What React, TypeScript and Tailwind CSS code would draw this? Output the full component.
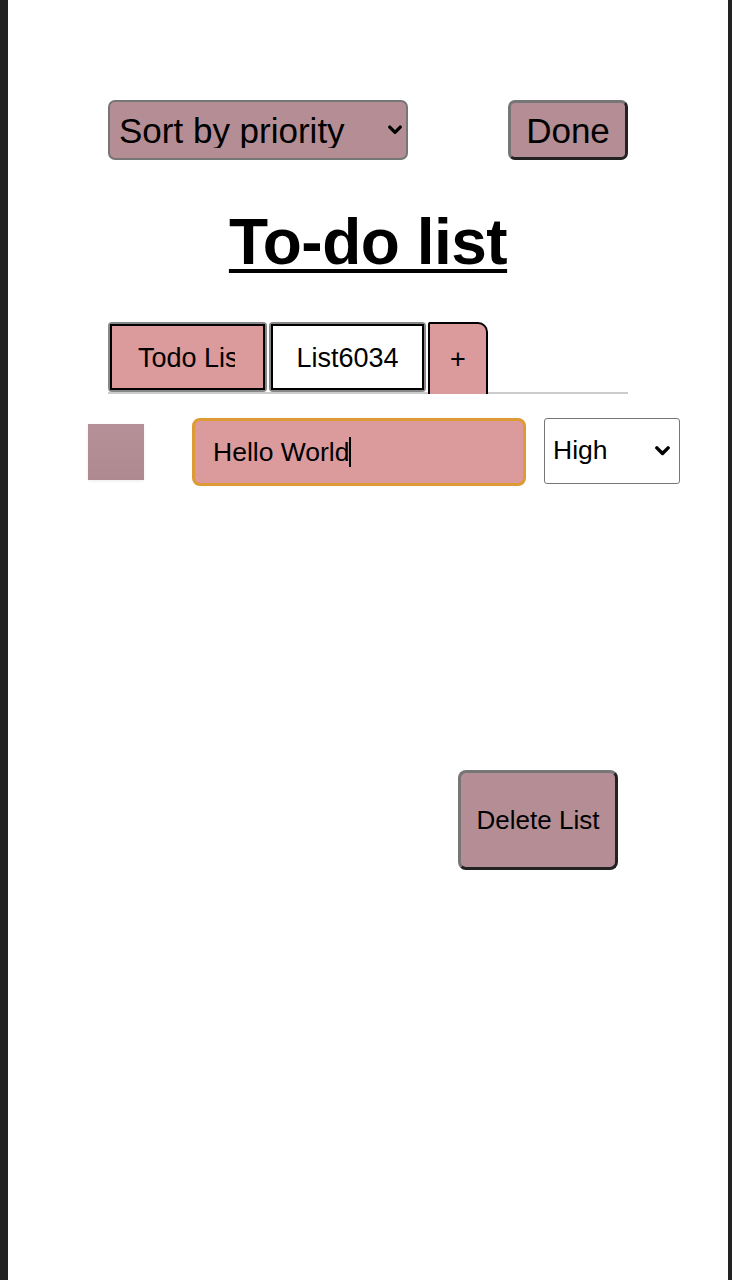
import { useState } from 'react';

function Chevron({ className }: { className: string }) {
  return (
    <svg viewBox="0 0 12 8" className={className} fill="none" stroke="currentColor" strokeWidth="2.8" strokeLinecap="round" strokeLinejoin="round">
      <path d="M1.5 1.5 6 6l4.5-4.5" />
    </svg>
  );
}

export default function App() {
  const [sort, setSort] = useState('priority');
  const [text, setText] = useState('Hello World');
  const [priority, setPriority] = useState('High');

  return (
    <div className="min-h-screen w-full bg-[#222222] flex" style={{ fontFamily: '"Liberation Sans", Arial, sans-serif' }}>
      <div className="flex-1 ml-[8px] mr-[4px] bg-white min-h-[1280px] text-black">
        <div className="w-[520px] mx-auto pt-[100px]">
          {/* top controls */}
          <div className="flex justify-between items-start">
            <div className="relative w-[300px] h-[60px]">
              <select
                value={sort}
                onChange={(e) => setSort(e.target.value)}
                className="appearance-none w-full h-full rounded-[7px] border-2 border-[#767676] bg-[#b48e94] pl-[9px] text-[35px] leading-none text-black outline-none"
              >
                <option value="priority">Sort by priority</option>
                <option value="date">Sort by date</option>
              </select>
              <Chevron className="absolute right-[6px] top-[25px] w-[14px] h-[10px] text-black pointer-events-none" />
            </div>
            <button className="w-[120px] h-[60px] rounded-[7px] border-[3px] border-t-[#767676] border-l-[#767676] border-b-[#222222] border-r-[#222222] bg-[#b48e94] text-[35px] leading-none">
              Done
            </button>
          </div>

          <h1 className="mt-[42px] text-center text-[64px] font-bold underline decoration-[4px] underline-offset-[5px] leading-[80px] tracking-[-0.5px]">
            To-do list
          </h1>

          {/* tabs */}
          <div className="mt-[40px] flex items-end gap-[2px] border-b-2 border-[#cccccc] h-[72px]">
            <button className="w-[159px] h-[70px] rounded-[4px] border-2 border-[#888888] p-0">
              <div className="h-full border-2 border-black bg-[#db9a9b] pl-[26px] pt-[3px] flex items-center">
                <span className="block w-[97px] overflow-hidden whitespace-nowrap text-[27px] leading-none text-left">Todo Lis</span>
              </div>
            </button>
            <button className="w-[157px] h-[70px] rounded-[4px] border-2 border-[#888888] p-0">
              <div className="h-full border-2 border-black bg-white pt-[3px] flex items-center justify-center">
                <span className="text-[27px] leading-none">List6034</span>
              </div>
            </button>
            <button className="relative z-10 -mb-[2px] w-[60px] h-[72px] rounded-tr-[10px] rounded-tl-[2px] border-2 border-b-0 border-black bg-[#db9a9b] text-[27px] leading-none">
              +
            </button>
          </div>
        </div>

        {/* item row */}
        <div className="mt-[24px] ml-[80px] flex items-start">
          <div className="mt-[6px] w-[56px] h-[56px] bg-gradient-to-b from-[#b59098] to-[#ae8a90] shadow-[0_1px_3px_rgba(0,0,0,0.08)]" />
          <div className="ml-[48px] relative w-[334px] h-[68px]">
            <input
              value={text}
              onChange={(e) => setText(e.target.value)}
              className="w-full h-full rounded-[8px] border-[3px] border-[#de9a34] bg-[#db9a9b] pl-[18px] text-[26.5px] text-black outline-none"
            />
            <span className="absolute left-[157px] top-[19px] w-[1.5px] h-[30px] bg-black pointer-events-none" />
          </div>
          <div className="relative ml-[18px] w-[136px] h-[66px]">
            <select
              value={priority}
              onChange={(e) => setPriority(e.target.value)}
              className="appearance-none w-full h-full rounded-[3px] border border-[#767676] bg-white pl-[8px] text-[26.5px] text-black outline-none"
            >
              <option>High</option>
              <option>Medium</option>
              <option>Low</option>
            </select>
            <Chevron className="absolute right-[10px] top-[28px] w-[15px] h-[10px] text-black pointer-events-none" />
          </div>
        </div>

        {/* delete */}
        <div className="w-[520px] mx-auto mt-[284px] flex justify-end pr-[10px]">
          <button className="w-[160px] h-[100px] rounded-[8px] border-[3px] border-t-[#767676] border-l-[#767676] border-b-[#222222] border-r-[#222222] bg-[#b48e94] text-[26px] leading-none">
            Delete List
          </button>
        </div>
      </div>
    </div>
  );
}
